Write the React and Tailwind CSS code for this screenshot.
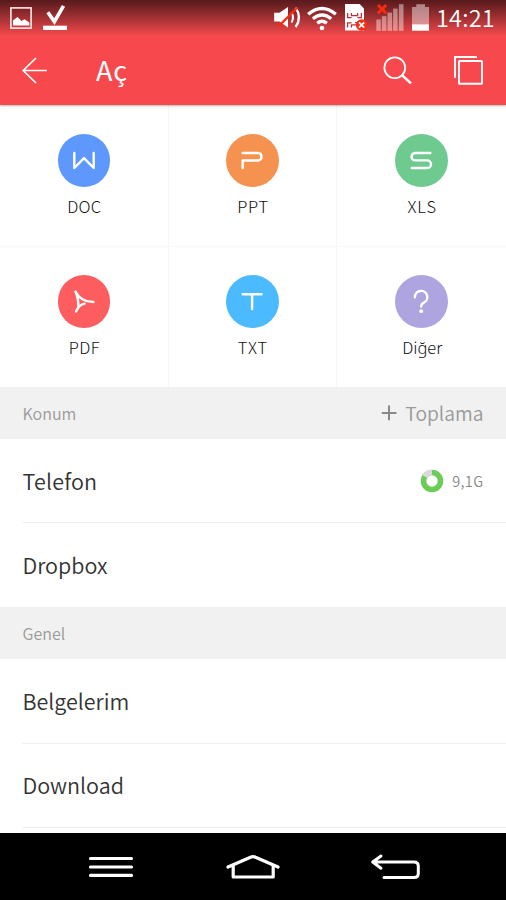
import React from "react";

/**
 * App.jsx
 * - "Open file" screen: file types, locations and common folders
 * - Includes the phone's status bar and navigation keys
 */

const fileTypes = [
  { label: "DOC", color: "bg-[#5e98fd]", Glyph: DocGlyph, tracking: "tracking-[0.2px]" },
  { label: "PPT", color: "bg-[#f69250]", Glyph: PptGlyph, tracking: "tracking-[0.8px]" },
  { label: "XLS", color: "bg-[#6fca8f]", Glyph: XlsGlyph, tracking: "tracking-[0.9px]" },
  { label: "PDF", color: "bg-[#fe5d5f]", Glyph: PdfGlyph, tracking: "tracking-[0.4px]" },
  { label: "TXT", color: "bg-[#4cbafe]", Glyph: TxtGlyph, tracking: "tracking-[1px]" },
  { label: "Diğer", color: "bg-[#aea4e0]", Glyph: OtherGlyph, tracking: "tracking-[0px]" }
];

function Glyph({ children }) {
  return (
    <svg
      className="size-[52px]"
      viewBox="0 0 52 52"
      fill="none"
      stroke="white"
      strokeWidth="2.4"
      strokeLinecap="round"
      strokeLinejoin="round"
    >
      {children}
    </svg>
  );
}

function DocGlyph() {
  return (
    <Glyph>
      <path d="M16.3 19V34L26 24.1L35.7 34V19" />
    </Glyph>
  );
}

function PptGlyph() {
  return (
    <Glyph>
      <path d="M16.7 19H32.3A3.8 3.8 0 0 1 32.3 26.5H16.7V34" />
    </Glyph>
  );
}

function XlsGlyph() {
  return (
    <Glyph>
      <path d="M35.3 19H20.3A3.7 3.7 0 0 0 20.3 26.4H32.2A3.8 3.8 0 0 1 32.2 34H16.8" />
    </Glyph>
  );
}

function PdfGlyph() {
  return (
    <Glyph>
      <path d="M17.6 16.8C20.5 23 26 27 35.4 27" />
      <path d="M17.6 16.8C19.8 21.5 20.4 25.5 20.4 31.5" />
      <path d="M18 36.6C20 32 22.5 29.3 26.6 28.6" />
    </Glyph>
  );
}

function TxtGlyph() {
  return (
    <Glyph>
      <path d="M16.7 19.2H35.5M26.1 19.2V34" />
    </Glyph>
  );
}

function OtherGlyph() {
  return (
    <Glyph>
      <path d="M19.9 22.2A6.2 6.2 0 1 1 28.5 27.8C26.8 28.6 26.2 29.4 26.2 31.6" />
      <circle cx="26.2" cy="36.2" r="1.9" fill="white" stroke="none" />
    </Glyph>
  );
}

function StatusBar() {
  return (
    <div className="flex h-9 items-start pl-2 text-white">
      <svg width="26" height="36" viewBox="0 0 26 36" fill="none">
        <rect x="2.9" y="7.9" width="20.2" height="20.2" stroke="#ffe9e9" strokeWidth="1.6" />
        <path d="M5 25.6V20.5L9.5 17L13.5 21L16.5 19.2L21.3 22.5V25.6Z" fill="white" />
      </svg>
      <svg className="ml-2" width="28" height="36" viewBox="0 0 28 36" fill="none">
        <path d="M5.8 12.2L12.4 21.6L21.5 5.8" stroke="white" strokeWidth="3.6" />
        <rect x="1" y="25.7" width="24" height="4.3" fill="white" />
      </svg>

      {/* muted sound */}
      <svg className="ml-[202px]" width="32" height="36" viewBox="0 0 32 36" fill="none">
        <path d="M2.2 12.8H7.5L16 7V27.5L7.5 21.5H2.2Z" fill="white" />
        <path d="M19.5 12.5Q22.5 17.5 19.5 22.5" stroke="white" strokeWidth="2" />
        <path d="M23.6 7.6Q30.4 17.5 23.6 27" stroke="white" strokeWidth="2.4" />
        <path d="M6.2 26.6L25.2 7.8" stroke="#fb2a0c" strokeWidth="2.2" />
      </svg>

      {/* wifi */}
      <svg className="ml-0.5" width="32" height="36" viewBox="0 0 32 36" fill="none" stroke="white" strokeWidth="3.4">
        <path d="M2.2 14.2Q16 2.6 29.8 14.2" />
        <path d="M6.8 18.8Q16 11 25.2 18.8" />
        <path d="M11.2 23.2Q16 19.2 20.8 23.2" />
        <circle cx="16" cy="28" r="2.3" fill="white" stroke="none" />
      </svg>

      {/* sim card */}
      <svg className="ml-1.5" width="26" height="36" viewBox="0 0 26 36" fill="none">
        <path d="M1 4H15.6L20 8.4V30.5H1Z" fill="white" />
        <path
          d="M3.6 13V17.6H7.6M7.4 13V15.6H13.6V13M17.4 13V17.6H13.4M3.6 27.4V22.8H7.6M7.4 27.4V24.8H12M11 22.6H13"
          stroke="#b83238"
          strokeWidth="1.3"
        />
        <circle cx="17.6" cy="25" r="5.8" fill="#f72c13" />
        <path d="M15 22.4L20.2 27.6M20.2 22.4L15 27.6" stroke="white" strokeWidth="1.8" />
      </svg>

      {/* mobile signal */}
      <svg className="ml-1.5" width="30" height="36" viewBox="0 0 30 36" fill="none">
        <g fill="white" opacity="0.42">
          <rect x="0.3" y="19.5" width="4.5" height="11.3" />
          <rect x="5.9" y="16.2" width="4.5" height="14.6" />
          <rect x="11.5" y="12.6" width="4.5" height="18.2" />
          <rect x="17.1" y="8.6" width="4.5" height="22.2" />
          <rect x="22.9" y="4.2" width="4.6" height="26.6" />
        </g>
        <path d="M2 5L10.2 13.2M10.2 5L2 13.2" stroke="#fb2a0c" strokeWidth="3" />
      </svg>

      {/* battery */}
      <svg className="ml-1.5" width="17" height="36" viewBox="0 0 17 36">
        <path d="M4.3 4.2H13V7H17V24.5H0V7H4.3Z" fill="white" fillOpacity="0.45" />
        <rect x="0" y="24.3" width="17" height="6.4" fill="white" />
      </svg>

      <span className="ml-[7px] text-[23.5px]/[34px] font-[350] tracking-[0.2px] whitespace-nowrap">
        14:21
      </span>
    </div>
  );
}

function TitleBar() {
  return (
    <div className="flex h-[69px] items-start text-white">
      <svg className="mt-5 ml-5" width="30" height="30" viewBox="0 0 30 30" fill="none" stroke="white" strokeWidth="1.7">
        <path d="M16 2L3.2 14.5L16 27M3.2 14.5H26.8" />
      </svg>
      <h1 className="mt-[14px] ml-[46px] text-[27px]/[40px] font-normal tracking-[0.8px]">Aç</h1>
      <svg className="mt-[18px] ml-auto" width="32" height="34" viewBox="0 0 32 34" fill="none" stroke="white">
        <circle cx="12.8" cy="13.8" r="10.4" strokeWidth="1.8" />
        <path d="M20.2 21.4L29 29.4" strokeWidth="2.6" />
      </svg>
      <svg className="mt-[18px] mr-[20px] ml-[38px]" width="34" height="34" viewBox="0 0 34 34" fill="none" stroke="white" strokeWidth="1.9">
        <path d="M3 24V3H25" />
        <rect x="7" y="7" width="23" height="22.8" rx="0.6" />
      </svg>
    </div>
  );
}

function SectionHeader({ title, children }) {
  return (
    <div className="flex h-[52px] items-center justify-between bg-[#f1f1f1] px-[22.5px] text-[#999]">
      <span className="text-[16px]/6 font-[350]">{title}</span>
      {children}
    </div>
  );
}

function Row({ label, tracking = "tracking-normal", children }) {
  return (
    <div className="ml-[22px] flex h-[84.2px] items-center justify-between border-b border-[#f0f0f0] pr-[22.5px] last:border-b-0">
      <span className={`pl-[0.5px] text-[21.5px]/8 font-[350] text-[#333] ${tracking}`}>{label}</span>
      {children}
    </div>
  );
}

export default function App() {
  return (
    <div className="flex h-[900px] w-[506px] flex-col overflow-hidden bg-white font-['Noto_Sans_CJK_JP','Noto_Sans',sans-serif]">
      <header className="relative h-[105px] shrink-0 bg-[#f7494d] bg-linear-to-b from-[#571a1c] from-0% via-[#f7494d] via-[36px] to-[#f7494d] shadow-[0_1px_2px_rgba(0,0,0,0.3)]">
        <StatusBar />
        <TitleBar />
      </header>

      <main className="h-[728px] shrink-0 overflow-hidden">
        <div className="grid h-[282px] grid-cols-3 grid-rows-[142px_140px]">
          {fileTypes.map(({ label, color, Glyph: Icon, tracking }) => (
            <div
              key={label}
              className="flex flex-col items-center border-r border-b border-[#f7f7f7] pt-[29px] nth-[3n]:border-r-0 nth-[n+4]:border-b-0 nth-[n+4]:pt-[28px]"
            >
              <div className={`size-[52.5px] rounded-full ${color}`}>
                <Icon />
              </div>
              <span className={`mt-[7.5px] pl-px text-[16.5px]/6 font-light text-[#111] ${tracking}`}>
                {label}
              </span>
            </div>
          ))}
        </div>

        <SectionHeader title="Konum">
          <span className="flex items-center gap-2 text-[19.3px]/7 font-[350]">
            <svg width="16" height="16" viewBox="0 0 16 16" stroke="#888" strokeWidth="2">
              <path d="M0.8 8H15.4M8 0.6V15.2" />
            </svg>
            Toplama
          </span>
        </SectionHeader>
        <div>
          <Row label="Telefon" tracking="tracking-[0.2px]">
            <span className="flex items-center gap-2 text-[14.5px]/5 font-[350] tracking-[0.4px] text-[#888]">
              <svg width="24" height="24" viewBox="0 0 24 24" fill="none" strokeWidth="5.6">
                <circle cx="12" cy="12" r="8.5" stroke="#6dcc58" />
                <path d="M4.8 7.5A8.5 8.5 0 0 1 12 3.5" stroke="#d9d9d9" />
              </svg>
              9,1G
            </span>
          </Row>
          <Row label="Dropbox" />
        </div>

        <SectionHeader title="Genel" />
        <div>
          <Row label="Belgelerim" />
          <Row label="Download" />
          <div className="h-2" />
        </div>
      </main>

      <nav className="flex h-[67px] shrink-0 bg-black">
        <svg className="ml-[86px]" width="50" height="67" viewBox="0 0 50 67" stroke="white" strokeWidth="3.2" strokeLinecap="round">
          <path d="M4.5 25.5H45.5M4.5 34H45.5M4.5 42.4H45.5" />
        </svg>
        <svg className="ml-[88px]" width="58" height="67" viewBox="0 0 58 67" fill="none" stroke="white" strokeWidth="3.2" strokeLinecap="round" strokeLinejoin="round">
          <path d="M4 34L26.5 24.2Q29 23 31.5 24.2L54 34" />
          <path d="M9.2 33V44H49.2V33" />
        </svg>
        <svg className="ml-[86px]" width="54" height="67" viewBox="0 0 54 67" fill="none" stroke="white" strokeWidth="3" strokeLinecap="round" strokeLinejoin="round">
          <path d="M13 23L4.7 29L13 35.2M4.7 29H46Q50.3 29 50.3 33V40.5Q50.3 44.5 46 44.5H16" />
        </svg>
      </nav>
    </div>
  );
}
